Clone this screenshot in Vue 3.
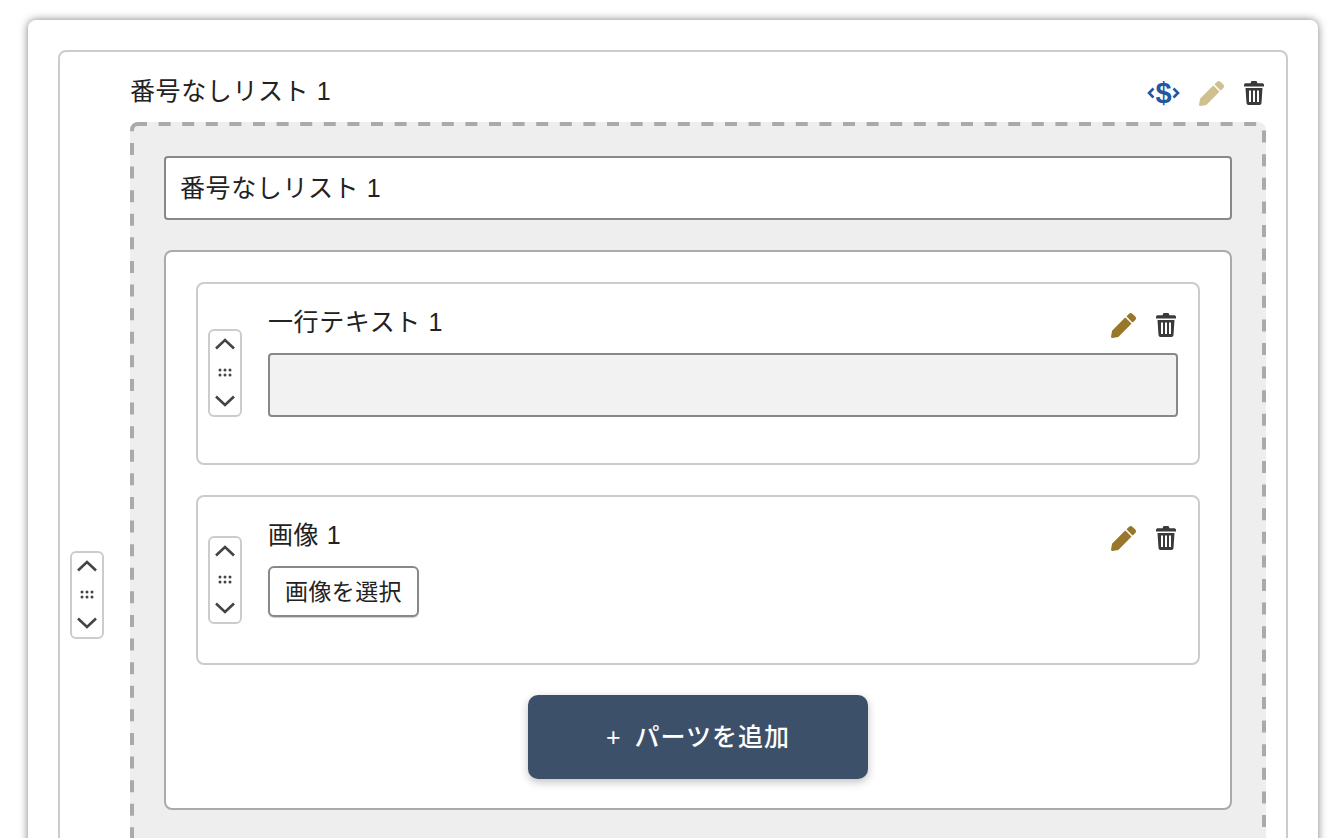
<template>
  <div class="page">
    <div class="card">
      <div class="field">
        <div class="handle">
          <svg class="chev" viewBox="0 0 20 12"><path d="M1 10.500 10 2l9 8.500" /></svg>
          <svg class="dots" viewBox="0 0 14 9"><circle v-for="d in dots" :key="d.x + '-' + d.y" :cx="d.x" :cy="d.y" r="1.500" /></svg>
          <svg class="chev" viewBox="0 0 20 12"><path d="M1 1.500 10 10l9-8.500" /></svg>
        </div>
        <div class="field-body">
          <div class="head">
            <span class="title">番号なしリスト 1</span>
            <div class="actions top-actions">
              <span class="var-icon">
                <svg viewBox="0 0 8 12"><path d="M6.500 1.500 2 6l4.500 4.500" /></svg>
                <b>$</b>
                <svg viewBox="0 0 8 12"><path d="M1.500 1.500 6 6l-4.500 4.500" /></svg>
              </span>
              <svg class="pencil light" viewBox="0 0 512 512"><path :d="pencilPath" /></svg>
              <svg class="trash" viewBox="0 0 20 24"><path :d="trashPath" fill-rule="evenodd" /></svg>
            </div>
          </div>
          <div class="dashed">
            <svg class="dash-line"><rect class="dash-rect" rx="6" /></svg>
            <input class="text-input" type="text" value="番号なしリスト 1" />
            <div class="inner">
              <div v-for="item in items" :key="item.title" class="item">
                <div class="handle">
                  <svg class="chev" viewBox="0 0 20 12"><path d="M1 10.500 10 2l9 8.500" /></svg>
                  <svg class="dots" viewBox="0 0 14 9"><circle v-for="d in dots" :key="d.x + '-' + d.y" :cx="d.x" :cy="d.y" r="1.500" /></svg>
                  <svg class="chev" viewBox="0 0 20 12"><path d="M1 1.500 10 10l9-8.500" /></svg>
                </div>
                <div class="item-body">
                  <div class="head item-head">
                    <span class="title">{{ item.title }}</span>
                    <div class="actions">
                      <svg class="pencil" viewBox="0 0 512 512"><path :d="pencilPath" /></svg>
                      <svg class="trash" viewBox="0 0 20 24"><path :d="trashPath" fill-rule="evenodd" /></svg>
                    </div>
                  </div>
                  <input v-if="item.type === 'text'" class="text-input filled" type="text" />
                  <button v-else class="pick-btn" type="button">画像を選択</button>
                </div>
              </div>
              <button class="add-btn" type="button"><span class="plus">+</span>パーツを追加</button>
            </div>
          </div>
        </div>
      </div>
    </div>
  </div>
</template>

<script setup>
const items = [
  { title: '一行テキスト 1', type: 'text' },
  { title: '画像 1', type: 'image' },
]

const dots = [
  { x: 2, y: 2 }, { x: 7, y: 2 }, { x: 12, y: 2 },
  { x: 2, y: 7 }, { x: 7, y: 7 }, { x: 12, y: 7 },
]

const pencilPath = 'M497.9 142.1l-46.1 46.1c-4.7 4.7-12.3 4.7-17 0l-111-111c-4.7-4.7-4.7-12.3 0-17l46.1-46.1c18.7-18.7 49.1-18.7 67.9 0l60.1 60.1c18.8 18.7 18.8 49.1 0 67.9zM284.2 99.8L21.6 362.4.4 483.9c-2.9 16.4 11.4 30.6 27.8 27.8l121.5-21.3 262.6-262.6c4.7-4.7 4.7-12.3 0-17l-111-111c-4.8-4.7-12.4-4.7-17.1 0z'

const trashPath = 'M7.500 0h5l1 2.200h4.500c1 0 2 .6 2 1.500V5.500H0V3.700c0-.9 1-1.500 2-1.500h4.500zM1.500 7h17l-1 15c-.1 1.100-1 2-2 2h-11c-1 0-1.900-.9-2-2zM5 9.500V21h2V9.500zM9 9.500V21h2V9.500zM13 9.500V21h2V9.500z'
</script>

<style scoped>
.page {
  padding: 20px 26px 20px 28px;
  font-family: "Liberation Sans", "Noto Sans CJK JP", sans-serif;
  color: #222;
}

.card {
  padding: 30px;
  background: #fff;
  border-radius: 8px;
  box-shadow: 0 0 8px rgba(0, 0, 0, 0.5);
}

.field {
  display: flex;
  align-items: center;
  gap: 26px;
  padding: 0 20px 0 10px;
  border: 2px solid #ccc;
  border-radius: 8px;
}

.field-body {
  flex: 1;
  min-width: 0;
  padding: 21px 0 46px;
}

.item-body {
  flex: 1;
  min-width: 0;
  padding: 20px 0 46px;
}

.handle {
  flex: none;
  box-sizing: border-box;
  width: 34px;
  height: 88px;
  display: flex;
  flex-direction: column;
  align-items: center;
  justify-content: space-between;
  padding: 7px 0 8px;
  border: 2px solid #ccc;
  border-radius: 6px;
  background: #fff;
}

.item:first-child .handle {
  margin-bottom: 1px;
}

.chev {
  width: 20px;
  height: 12px;
  fill: none;
  stroke: #444;
  stroke-width: 2.600;
}

.dots {
  width: 14px;
  height: 9px;
  fill: #444;
}

.head {
  display: flex;
  justify-content: space-between;
  align-items: center;
  height: 36px;
  margin-bottom: 13px;
}

.title {
  font-size: 25px;
  letter-spacing: 0.6px;
  line-height: 36px;
  color: #222;
}

.actions {
  display: flex;
  align-items: center;
  gap: 20px;
  margin-top: 6px;
  margin-right: 2px;
}

.top-actions {
  margin-top: 4px;
}

.var-icon {
  display: flex;
  align-items: center;
  justify-content: space-between;
  width: 33px;
  height: 28px;
  margin-right: -1px;
  color: #2556a0;
  font-size: 29px;
  line-height: 28px;
}

.var-icon svg {
  flex: none;
  width: 8px;
  height: 12px;
  fill: none;
  stroke: #2556a0;
  stroke-width: 2.600;
}

.var-icon b {
  flex: none;
  font-weight: 700;
}

.pencil {
  width: 25px;
  height: 25px;
  fill: #98772a;
}

.pencil.light {
  fill: #cfc08f;
}

.trash {
  width: 20px;
  height: 24px;
  fill: #3a3a3a;
}

.dashed {
  position: relative;
  box-sizing: border-box;
  min-height: 970px;
  padding: 34px;
  background: #eee;
  border-radius: 8px;
}

.dash-line {
  position: absolute;
  top: 0;
  left: 0;
  width: 100%;
  height: 100%;
  pointer-events: none;
}

.dash-rect {
  x: 2px;
  y: 2px;
  width: calc(100% - 4px);
  height: calc(100% - 4px);
  fill: none;
  stroke: #aaa;
  stroke-width: 4;
  stroke-dasharray: 12 11.600;
  stroke-dashoffset: 3;
}

.text-input {
  display: block;
  position: relative;
  box-sizing: border-box;
  width: 100%;
  height: 64px;
  padding: 0 14px 4px;
  font-family: inherit;
  font-size: 25px;
  letter-spacing: 0.6px;
  color: #222;
  background: #fff;
  border: 2px solid #888;
  border-radius: 4px;
  outline: none;
}

.text-input.filled {
  background: #f2f2f2;
}

.inner {
  position: relative;
  display: flex;
  flex-direction: column;
  margin-top: 30px;
  padding: 30px 30px 29px;
  background: #fff;
  border: 2px solid #aaa;
  border-radius: 8px;
}

.item {
  display: flex;
  align-items: center;
  gap: 26px;
  margin-bottom: 30px;
  padding: 0 20px 0 10px;
  border: 2px solid #ccc;
  border-radius: 8px;
}

.pick-btn {
  display: block;
  box-sizing: border-box;
  width: 151px;
  height: 51px;
  padding: 0 0 3px;
  font-family: inherit;
  font-size: 23px;
  letter-spacing: 0.4px;
  color: #222;
  background: #fff;
  border: 2px solid #888;
  border-radius: 6px;
  box-shadow: 0 1px 1px rgba(0, 0, 0, 0.2);
}

.add-btn {
  align-self: center;
  width: 340px;
  height: 84px;
  padding: 0 0 4px;
  font-family: inherit;
  font-size: 25px;
  font-weight: 500;
  letter-spacing: 1px;
  color: #fff;
  background: #3d5069;
  border: none;
  border-radius: 10px;
  box-shadow: 0 3px 8px rgba(0, 0, 0, 0.25);
}

.plus {
  margin-right: 13px;
}
</style>

<style>
html,
body {
  margin: 0;
  overflow: hidden;
  background: #fff;
}
</style>
